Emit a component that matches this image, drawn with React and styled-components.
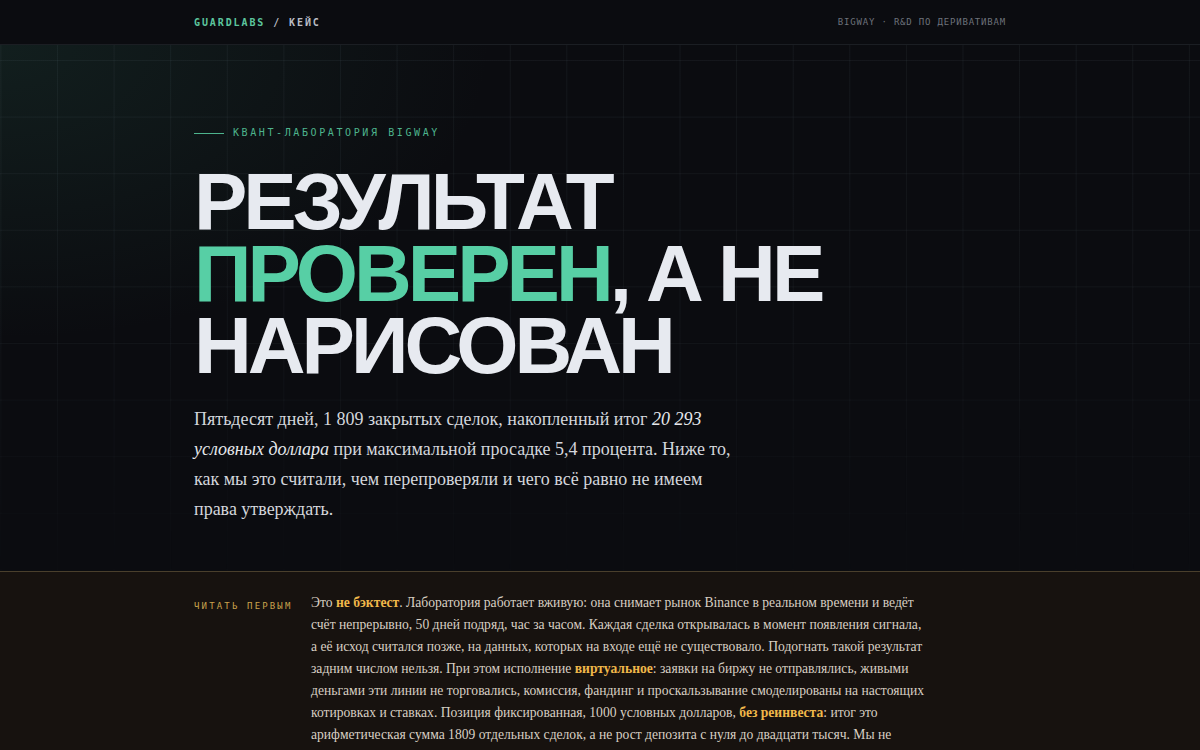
import styled, { createGlobalStyle } from "styled-components";

const GlobalStyle = createGlobalStyle`
  html, body {
    margin: 0;
    padding: 0;
    background: #0b0c10;
  }
  * { box-sizing: border-box; }
`;

const mono = `"DejaVu Sans Mono", "Liberation Mono", monospace`;
const serif = `"Liberation Serif", "DejaVu Serif", serif`;
const sans = `"Liberation Sans", Arial, sans-serif`;

const Page = styled.div`
  min-height: 750px;
  background: #0b0c10;
`;

const Container = styled.div`
  width: 812px;
  margin: 0 auto;
`;

const Nav = styled.header`
  height: 45px;
  background: #0b0c10;
  border-bottom: 1px solid #1b1e23;
`;

const NavInner = styled(Container)`
  height: 100%;
  display: flex;
  align-items: center;
  justify-content: space-between;
`;

const Brand = styled.div`
  font-family: ${mono};
  font-size: 10px;
  font-weight: 700;
  letter-spacing: 0.19em;
  color: #b9bdc4;
`;

const BrandName = styled.span`
  color: #5cc59d;
`;

const NavMeta = styled.div`
  font-family: ${mono};
  font-size: 9px;
  letter-spacing: 0.09em;
  color: #6d727b;
`;

const Hero = styled.section`
  position: relative;
  padding: 81px 0 47px;
  background:
    radial-gradient(ellipse 700px 420px at 0% 0%, rgba(40, 90, 75, 0.24), transparent 70%),
    #0b0c10;
  overflow: hidden;
`;

const Grid = styled.div`
  position: absolute;
  inset: 0;
  background-image:
    linear-gradient(to right, rgba(120, 140, 150, 0.09) 1px, transparent 1px),
    linear-gradient(to bottom, rgba(120, 140, 150, 0.09) 1px, transparent 1px);
  background-size: 56.6px 56.6px;
  background-position: 0.4px 15px;
  -webkit-mask-image: linear-gradient(to bottom, #000 0%, rgba(0,0,0,0.8) 50%, rgba(0,0,0,0.15) 100%);
  mask-image: linear-gradient(to bottom, #000 0%, rgba(0,0,0,0.8) 50%, rgba(0,0,0,0.15) 100%);
  pointer-events: none;
`;

const HeroInner = styled(Container)`
  position: relative;
`;

const Eyebrow = styled.div`
  display: flex;
  align-items: center;
  gap: 9px;
  font-family: ${mono};
  font-size: 10px;
  line-height: 14px;
  letter-spacing: 0.26em;
  color: #4db48d;

  &::before {
    content: "";
    width: 30px;
    height: 1px;
    background: #4db48d;
  }
`;

const Title = styled.h1`
  margin: 26px 0 0;
  font-family: ${sans};
  font-weight: 700;
  font-size: 80px;
  line-height: 72px;
  letter-spacing: -0.05em;
  color: #e7eaf0;
`;

const Accent = styled.span`
  color: #57cfa5;
`;

const Lead = styled.p`
  margin: 22px 0 0;
  max-width: 540px;
  font-family: ${serif};
  font-size: 18px;
  line-height: 30px;
  color: #d3d6dc;

  em {
    font-style: italic;
    color: #e6e8ec;
  }
`;

const Notice = styled.section`
  background: #17120f;
  border-top: 1px solid #4a3f2c;
  padding: 20px 0 30px;
`;

const NoticeInner = styled(Container)`
  display: grid;
  grid-template-columns: 100px 1fr;
  column-gap: 17px;
`;

const NoticeLabel = styled.div`
  margin-top: 8px;
  font-family: ${mono};
  font-size: 9px;
  line-height: 12px;
  letter-spacing: 0.24em;
  color: #c9a24c;
  white-space: nowrap;
`;

const NoticeText = styled.p`
  margin: 0;
  max-width: 616px;
  font-family: ${serif};
  font-size: 13.6px;
  line-height: 22px;
  color: #d7cfc3;

  strong {
    color: #efb74a;
    font-weight: 700;
  }
`;

export default function App() {
  return (
    <Page>
      <GlobalStyle />
      <Nav>
        <NavInner>
          <Brand>
            <BrandName>GUARDLABS</BrandName> / КЕЙС
          </Brand>
          <NavMeta>BIGWAY · R&amp;D ПО ДЕРИВАТИВАМ</NavMeta>
        </NavInner>
      </Nav>

      <Hero>
        <Grid />
        <HeroInner>
          <Eyebrow>КВАНТ-ЛАБОРАТОРИЯ BIGWAY</Eyebrow>
          <Title>
            РЕЗУЛЬТАТ
            <br />
            <Accent>ПРОВЕРЕН</Accent>, А НЕ
            <br />
            НАРИСОВАН
          </Title>
          <Lead>
            Пятьдесят дней, 1 809 закрытых сделок, накопленный итог{" "}
            <em>20 293 условных доллара</em> при максимальной просадке 5,4
            процента. Ниже то, как мы это считали, чем перепроверяли и чего всё
            равно не имеем права утверждать.
          </Lead>
        </HeroInner>
      </Hero>

      <Notice>
        <NoticeInner>
          <NoticeLabel>ЧИТАТЬ ПЕРВЫМ</NoticeLabel>
          <NoticeText>
            Это <strong>не бэктест</strong>. Лаборатория работает вживую: она
            снимает рынок Binance в реальном времени и ведёт счёт непрерывно, 50
            дней подряд, час за часом. Каждая сделка открывалась в момент
            появления сигнала, а её исход считался позже, на данных, которых на
            входе ещё не существовало. Подогнать такой результат задним числом
            нельзя. При этом исполнение <strong>виртуальное</strong>: заявки на
            биржу не отправлялись, живыми деньгами эти линии не торговались,
            комиссия, фандинг и проскальзывание смоделированы на настоящих
            котировках и ставках. Позиция фиксированная, 1000 условных долларов,{" "}
            <strong>без реинвеста</strong>: итог это арифметическая сумма 1809
            отдельных сделок, а не рост депозита с нуля до двадцати тысяч. Мы не
            утверждаем, что так же будет дальше.
          </NoticeText>
        </NoticeInner>
      </Notice>
    </Page>
  );
}
